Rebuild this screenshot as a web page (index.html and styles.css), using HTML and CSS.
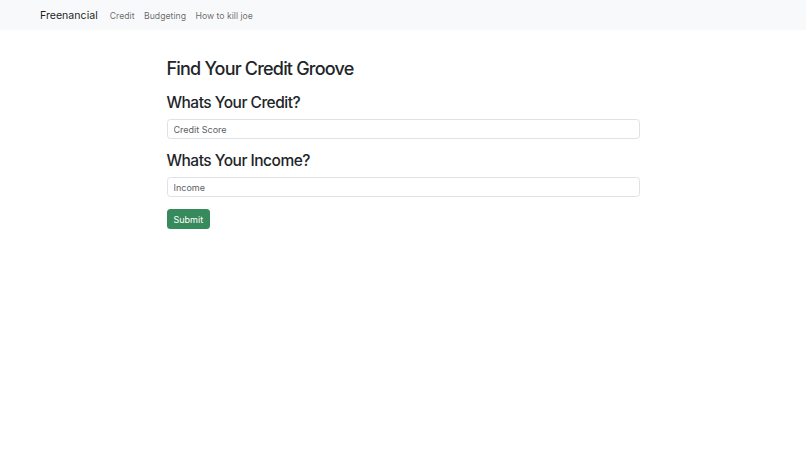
FILE: index.html
```html
<!DOCTYPE html>
<html>
<head>
<meta charset="utf-8">
<link rel="stylesheet" href="styles.css">
</head>
<body>
<nav class="navbar">
  <a class="brand" href="#">Freenancial</a>
  <ul class="nav-links">
    <li><a href="#">Credit</a></li>
    <li><a href="#">Budgeting</a></li>
    <li><a href="#">How to kill joe</a></li>
  </ul>
</nav>
<main class="container">
  <h1 class="title">Find Your Credit Groove</h1>
  <form class="form">
    <h2 class="label">Whats Your Credit?</h2>
    <input class="field" type="text" placeholder="Credit Score">
    <h2 class="label">Whats Your Income?</h2>
    <input class="field" type="text" placeholder="Income">
    <button class="btn" type="button">Submit</button>
  </form>
</main>
</body>
</html>
```
FILE: styles.css
```css
* { box-sizing: border-box; }
body {
  margin: 0;
  font-family: Inter, "Liberation Sans", Arial, sans-serif;
  color: #212529;
  background: #fff;
}
.navbar {
  display: flex;
  align-items: baseline;
  height: 30px;
  padding: 9px 0 0 40px;
  background: #f8f9fa;
}
.brand {
  font-size: 10.6px;
  line-height: 13px;
  color: rgba(0,0,0,0.9);
  text-decoration: none;
  margin-right: 12px;
}
.nav-links {
  display: flex;
  align-items: baseline;
  gap: 9.5px;
  list-style: none;
  margin: 0;
  padding: 0;
  font-size: 8.7px;
  line-height: 13px;
}
.nav-links a {
  color: rgba(0,0,0,0.6);
  text-decoration: none;
}
.container {
  width: 473px;
  margin: 0 auto;
  padding-top: 27.5px;
}
.title {
  font-size: 18px;
  font-weight: 500;
  margin: 0 0 14px;
  line-height: 22px;
  letter-spacing: -0.8px;
}
.form {
  display: flex;
  flex-direction: column;
  align-items: flex-start;
}
.label {
  font-size: 15.5px;
  font-weight: 500;
  margin: 0 0 7.5px;
  line-height: 18px;
  letter-spacing: -0.5px;
}
.field {
  width: 100%;
  height: 20px;
  border: 1px solid #dee2e6;
  border-radius: 3.5px;
  padding: 0 6px;
  font-family: inherit;
  font-size: 9px;
  color: #212529;
  margin-bottom: 12.5px;
}
.field::placeholder { color: #5c6166; }
.btn {
  height: 20px;
  padding: 0 7px;
  background: #378a5c;
  color: #fff;
  border: none;
  border-radius: 3.5px;
  font-family: inherit;
  font-size: 9px;
  margin-top: -0.5px;
}
```
